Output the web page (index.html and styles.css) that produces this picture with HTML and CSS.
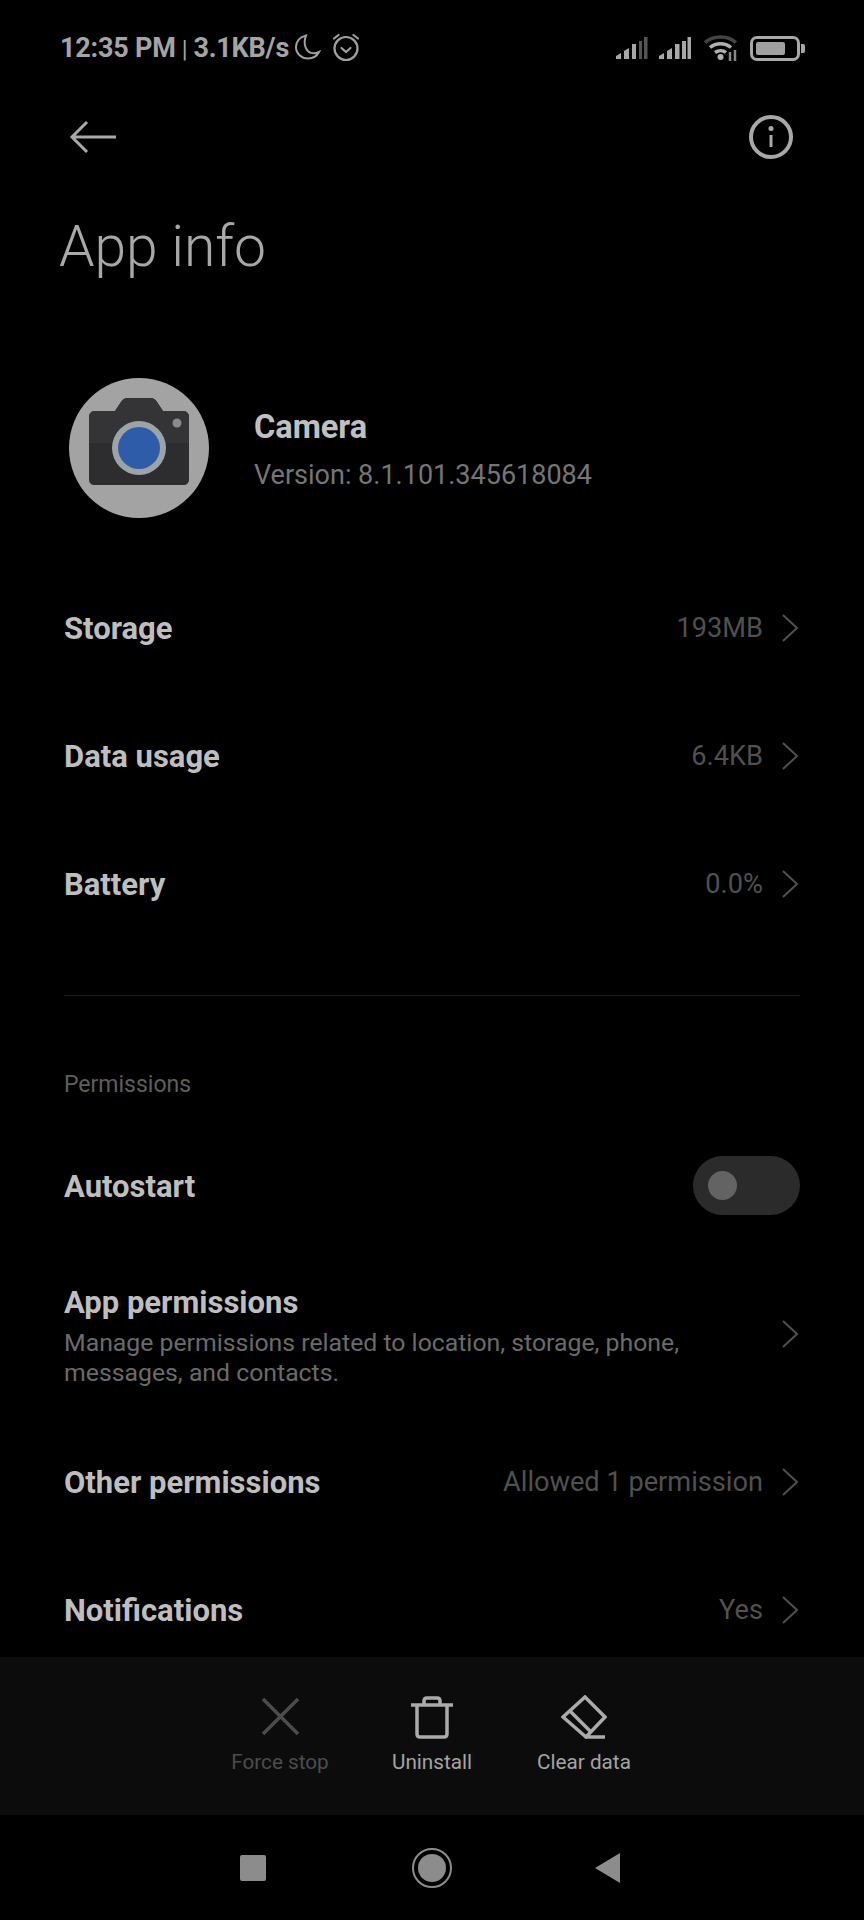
FILE: index.html
```html
<!DOCTYPE html>
<html>
<head>
    <meta charset="utf-8">
    <title>App info</title>
    <link rel="stylesheet" href="styles.css">
</head>
<body>
    <div class="screen">
        <div class="content">
            <div class="status-bar">
                <div class="status-left">
                    <span class="status-text">12:35 PM<span class="status-sep">|</span>3.1KB/s</span>
                    <svg class="moon" width="28" height="28" viewBox="0 0 28 28"><path d="M12 2.500C6 4 2 8.500 2 14c0 6.500 5.500 11.500 12 11.500 4.700 0 8.800-2.300 11-6.500-2 1-3.500 1.300-5.500 1.300C12.500 20.300 8.500 12 12 2.500z"/></svg>
                    <svg class="alarm" width="30" height="30" viewBox="0 0 30 30"><circle cx="15" cy="16.500" r="11.500"/><path d="M10.500 16l4.500 4 4.500-4"/><path d="M3 6.500L7.500 3M27 6.500L22.500 3"/></svg>
                </div>
                <div class="status-right">
                    <svg width="33" height="24" viewBox="0 0 33 24"><path class="bar-on" d="M1 23v-3l5-3v6zM9 23v-8l5-3v11zM17 23V8h4v15z"/><path class="bar-off" d="M24 23V5h3v18zM29 23V1h3.500v22z"/></svg>
                    <svg width="34" height="24" viewBox="0 0 34 24"><path class="bar-on" d="M1 23v-3l5-3v6zM9 23v-8l5-3v11zM17 23V8h4.500v15zM24 23V5h4v18zM29.500 23V1h3.500v22z"/></svg>
                    <svg class="wifi" width="36" height="28" viewBox="0 0 36 28"><path class="wifi-far" d="M2 8.500C10 1 25 1 33 8.500"/><path d="M7 13.500C13 8.500 22 8.500 28 13.500"/><path d="M12 18.500c3.500-2.500 8-2.500 11 0"/><circle class="wifi-dot" cx="17.500" cy="23" r="3"/><path class="wifi-arrows" d="M27 27v-9M32 27v-11"/></svg>
                    <div class="battery"><div class="battery-level"></div></div>
                    <div class="battery-nub"></div>
                </div>
            </div>
            <div class="toolbar">
                <svg width="48" height="34" viewBox="0 0 48 34"><path d="M47 17H3M18 2L3 17l15 15"/></svg>
                <svg width="44" height="44" viewBox="0 0 44 44"><circle cx="22" cy="22" r="20"/><circle class="info-dot" cx="22" cy="13.500" r="2.500"/><path d="M22 20v12"/></svg>
            </div>
            <h1 class="title">App info</h1>
            <div class="app-head">
                <svg class="app-icon" width="140" height="140" viewBox="0 0 140 140">
                    <circle cx="70" cy="70" r="70" fill="#a3a3a3"/>
                    <path d="M26 33h20l6-9c2-3 4-4 6-4h24c2 0 4 1 6 4l6 9h20c4 0 6 3 6 6v62c0 4-2 6-6 6H26c-4 0-6-2-6-6V39c0-3 2-6 6-6z" fill="#2d2d2f"/>
                    <path d="M26 33h20l6-9c2-3 4-4 6-4h24c2 0 4 1 6 4l6 9h20c4 0 6 3 6 6v26H20V39c0-3 2-6 6-6z" fill="#343436"/>
                    <circle cx="108" cy="45" r="4.500" fill="#8a8a8a"/>
                    <circle cx="70" cy="70" r="27" fill="#9ea3a8"/>
                    <circle cx="70" cy="70" r="21" fill="#2f5ca8"/>
                </svg>
                <div class="app-text">
                    <div class="app-name">Camera</div>
                    <div class="app-version">Version: 8.1.101.345618084</div>
                </div>
            </div>

            <div class="row">
                <span class="row-label">Storage</span>
                <span class="row-value">193MB</span>
                <svg class="chevron" width="18" height="28" viewBox="0 0 18 28"><path d="M2 1l14 13L2 27"/></svg>
            </div>
            <div class="row">
                <span class="row-label">Data usage</span>
                <span class="row-value">6.4KB</span>
                <svg class="chevron" width="18" height="28" viewBox="0 0 18 28"><path d="M2 1l14 13L2 27"/></svg>
            </div>
            <div class="row">
                <span class="row-label">Battery</span>
                <span class="row-value">0.0%</span>
                <svg class="chevron" width="18" height="28" viewBox="0 0 18 28"><path d="M2 1l14 13L2 27"/></svg>
            </div>

            <div class="divider"></div>
            <div class="section-label">Permissions</div>

            <div class="row">
                <span class="row-label">Autostart</span>
                <div class="toggle"><div class="toggle-knob"></div></div>
            </div>
            <div class="row row-tall">
                <div class="row-text">
                    <div class="row-label">App permissions</div>
                    <div class="row-desc">Manage permissions related to location, storage, phone, messages, and contacts.</div>
                </div>
                <svg class="chevron" width="18" height="28" viewBox="0 0 18 28"><path d="M2 1l14 13L2 27"/></svg>
            </div>
            <div class="row">
                <span class="row-label">Other permissions</span>
                <span class="row-value">Allowed 1 permission</span>
                <svg class="chevron" width="18" height="28" viewBox="0 0 18 28"><path d="M2 1l14 13L2 27"/></svg>
            </div>
            <div class="row">
                <span class="row-label">Notifications</span>
                <span class="row-value">Yes</span>
                <svg class="chevron" width="18" height="28" viewBox="0 0 18 28"><path d="M2 1l14 13L2 27"/></svg>
            </div>
        </div>

        <div class="actions">
            <div class="action action-off">
                <svg width="44" height="44" viewBox="0 0 44 44"><path d="M5 4l35 35M40 4L5 39"/></svg>
                <span>Force stop</span>
            </div>
            <div class="action">
                <svg width="44" height="44" viewBox="0 0 44 44"><path d="M1 10h42M7 10v29c0 2 1 3 3 3h24c2 0 3-1 3-3V10M14 10V6c0-2 1-3 3-3h10c2 0 3 1 3 3v4"/></svg>
                <span>Uninstall</span>
            </div>
            <div class="action">
                <svg width="46" height="44" viewBox="0 0 46 44"><path d="M24 2l20 20-19 20L2 22zM8 15l22 22M24 42h20"/></svg>
                <span>Clear data</span>
            </div>
        </div>

        <div class="nav">
            <div class="nav-item"><div class="nav-square"></div></div>
            <div class="nav-item"><div class="nav-home"><div class="nav-home-dot"></div></div></div>
            <div class="nav-item"><div class="nav-back"></div></div>
        </div>
    </div>
</body>
</html>
```

FILE: styles.css
```css
html, body {
    margin: 0;
    padding: 0;
    background-color: #000;
}
body {
    font-family: Roboto, "Noto Sans", sans-serif;
    color: #c8c8c8;
}
svg {
    display: block;
    flex: none;
    fill: none;
}
.screen {
    width: 864px;
    height: 1920px;
    display: flex;
    flex-direction: column;
    overflow: hidden;
}
.content {
    height: 1657px;
    overflow: hidden;
}

/* status bar */
.status-bar {
    height: 96px;
    padding: 0 59px 0 60px;
    display: flex;
    align-items: center;
    justify-content: space-between;
}
.status-left, .status-right {
    display: flex;
    align-items: center;
}
.status-text {
    font-size: 27px;
    font-weight: 700;
    color: #a4a4a4;
    letter-spacing: -0.2px;
}
.status-sep {
    font-weight: 400;
    font-size: 24px;
    margin: 0 6px;
}
.moon {
    margin-left: 5px;
    margin-top: -2px;
    stroke: #a0a0a0;
    stroke-width: 2;
}
.alarm {
    margin-left: 9px;
    margin-top: -2px;
    stroke: #a0a0a0;
    stroke-width: 2.200;
    stroke-linecap: round;
}
.status-right {
    gap: 11px;
}
.status-right svg:first-child {
    margin-right: -1px;
}
.bar-on {
    fill: #a8a8a8;
}
.bar-off {
    fill: #555;
}
.wifi {
    stroke: #b0b0b0;
    stroke-width: 3.500;
}
.wifi-far {
    stroke: #444;
}
.wifi-dot {
    fill: #b0b0b0;
    stroke: none;
}
.wifi-arrows {
    stroke-width: 2.500;
    stroke: #888;
}
.battery {
    width: 50px;
    height: 25px;
    box-sizing: border-box;
    border: 3px solid #a8a8a8;
    border-radius: 7px;
    padding: 3px;
    margin-left: 0;
}
.battery-level {
    width: 29px;
    height: 100%;
    background-color: #a0a0a0;
    border-radius: 2px;
}
.battery-nub {
    width: 4px;
    height: 9px;
    background-color: #a8a8a8;
    border-radius: 0 2px 2px 0;
    margin-left: -10px;
}

/* toolbar */
.toolbar {
    height: 82px;
    padding: 0 71px 0 69px;
    display: flex;
    align-items: center;
    justify-content: space-between;
}
.toolbar svg {
    stroke: #a8a8a8;
    stroke-width: 3;
}
.toolbar .info-dot {
    fill: #a8a8a8;
    stroke: none;
}
.toolbar svg circle {
    stroke-width: 4;
}
.title {
    margin: 34px 0 0;
    padding-left: 59px;
    font-size: 57px;
    line-height: 70px;
    font-weight: 300;
    color: #a8a8a8;
    letter-spacing: -0.1px;
}

/* app head */
.app-head {
    margin-top: 96px;
    padding-left: 69px;
    height: 140px;
    display: flex;
    align-items: center;
}
.app-text {
    margin-left: 45px;
    padding-top: 5px;
}
.app-name {
    font-size: 32.500px;
    font-weight: 700;
    color: #c0c0c0;
    line-height: 40px;
}
.app-version {
    font-size: 27px;
    color: #757575;
    line-height: 38px;
    margin-top: 9px;
}

/* rows */
.row {
    height: 128px;
    padding: 0 64px;
    display: flex;
    align-items: center;
}
.app-head + .row {
    margin-top: 46px;
}
.row-tall {
    height: 168px;
}
.row-label {
    font-size: 31px;
    font-weight: 700;
    color: #bebebe;
}
.row-value {
    margin-left: auto;
    font-size: 27.200px;
    color: #505050;
}
.chevron {
    margin-left: 18px;
    margin-right: 1px;
    stroke: #505050;
    stroke-width: 2;
}
.row-text {
    flex: 1;
    padding-top: 3px;
}
.row-desc {
    font-size: 24.800px;
    line-height: 30px;
    color: #6a6a6a;
    margin-top: 7px;
    max-width: 660px;
}
.divider {
    margin: 47px 64px 0;
    height: 1px;
    background-color: #1c1c1c;
}
.section-label {
    margin-top: 73px;
    padding-left: 64px;
    font-size: 23px;
    line-height: 32px;
    color: #5e5e5e;
    margin-bottom: 21px;
}
.toggle {
    margin-left: auto;
    margin-top: -2px;
    width: 107px;
    height: 59px;
    border-radius: 30px;
    background-color: #2b2b2b;
    display: flex;
    align-items: center;
    padding-left: 15px;
    box-sizing: border-box;
}
.toggle-knob {
    width: 29px;
    height: 29px;
    border-radius: 50%;
    background-color: #636363;
}

/* bottom actions */
.actions {
    height: 158px;
    background-color: #0c0c0c;
    display: flex;
    justify-content: center;
}
.action {
    width: 152px;
    padding-top: 38px;
    display: flex;
    flex-direction: column;
    align-items: center;
    font-size: 20.700px;
    color: #a4a4a4;
}
.action svg {
    stroke: #ababab;
    stroke-width: 3.500;
    margin-bottom: 9px;
}
.action span {
    line-height: 28px;
}
.action-off {
    color: #4c4c4c;
}
.action-off svg {
    stroke: #4c4c4c;
}

/* navigation bar */
.nav {
    height: 105px;
    display: flex;
    justify-content: center;
    align-items: center;
}
.nav-item {
    width: 177px;
    display: flex;
    justify-content: center;
}
.nav-square {
    width: 26px;
    height: 26px;
    border-radius: 2px;
    background-color: #8c8c8c;
    margin-right: 4px;
}
.nav-home {
    width: 40px;
    height: 40px;
    box-sizing: border-box;
    border: 2px solid #8c8c8c;
    border-radius: 50%;
    display: flex;
    align-items: center;
    justify-content: center;
}
.nav-home-dot {
    width: 28px;
    height: 28px;
    border-radius: 50%;
    background-color: #8c8c8c;
}
.nav-back {
    width: 0;
    height: 0;
    margin-right: 4px;
    border-style: solid;
    border-width: 15px 25px 15px 0;
    border-color: transparent #8c8c8c transparent transparent;
}
```
